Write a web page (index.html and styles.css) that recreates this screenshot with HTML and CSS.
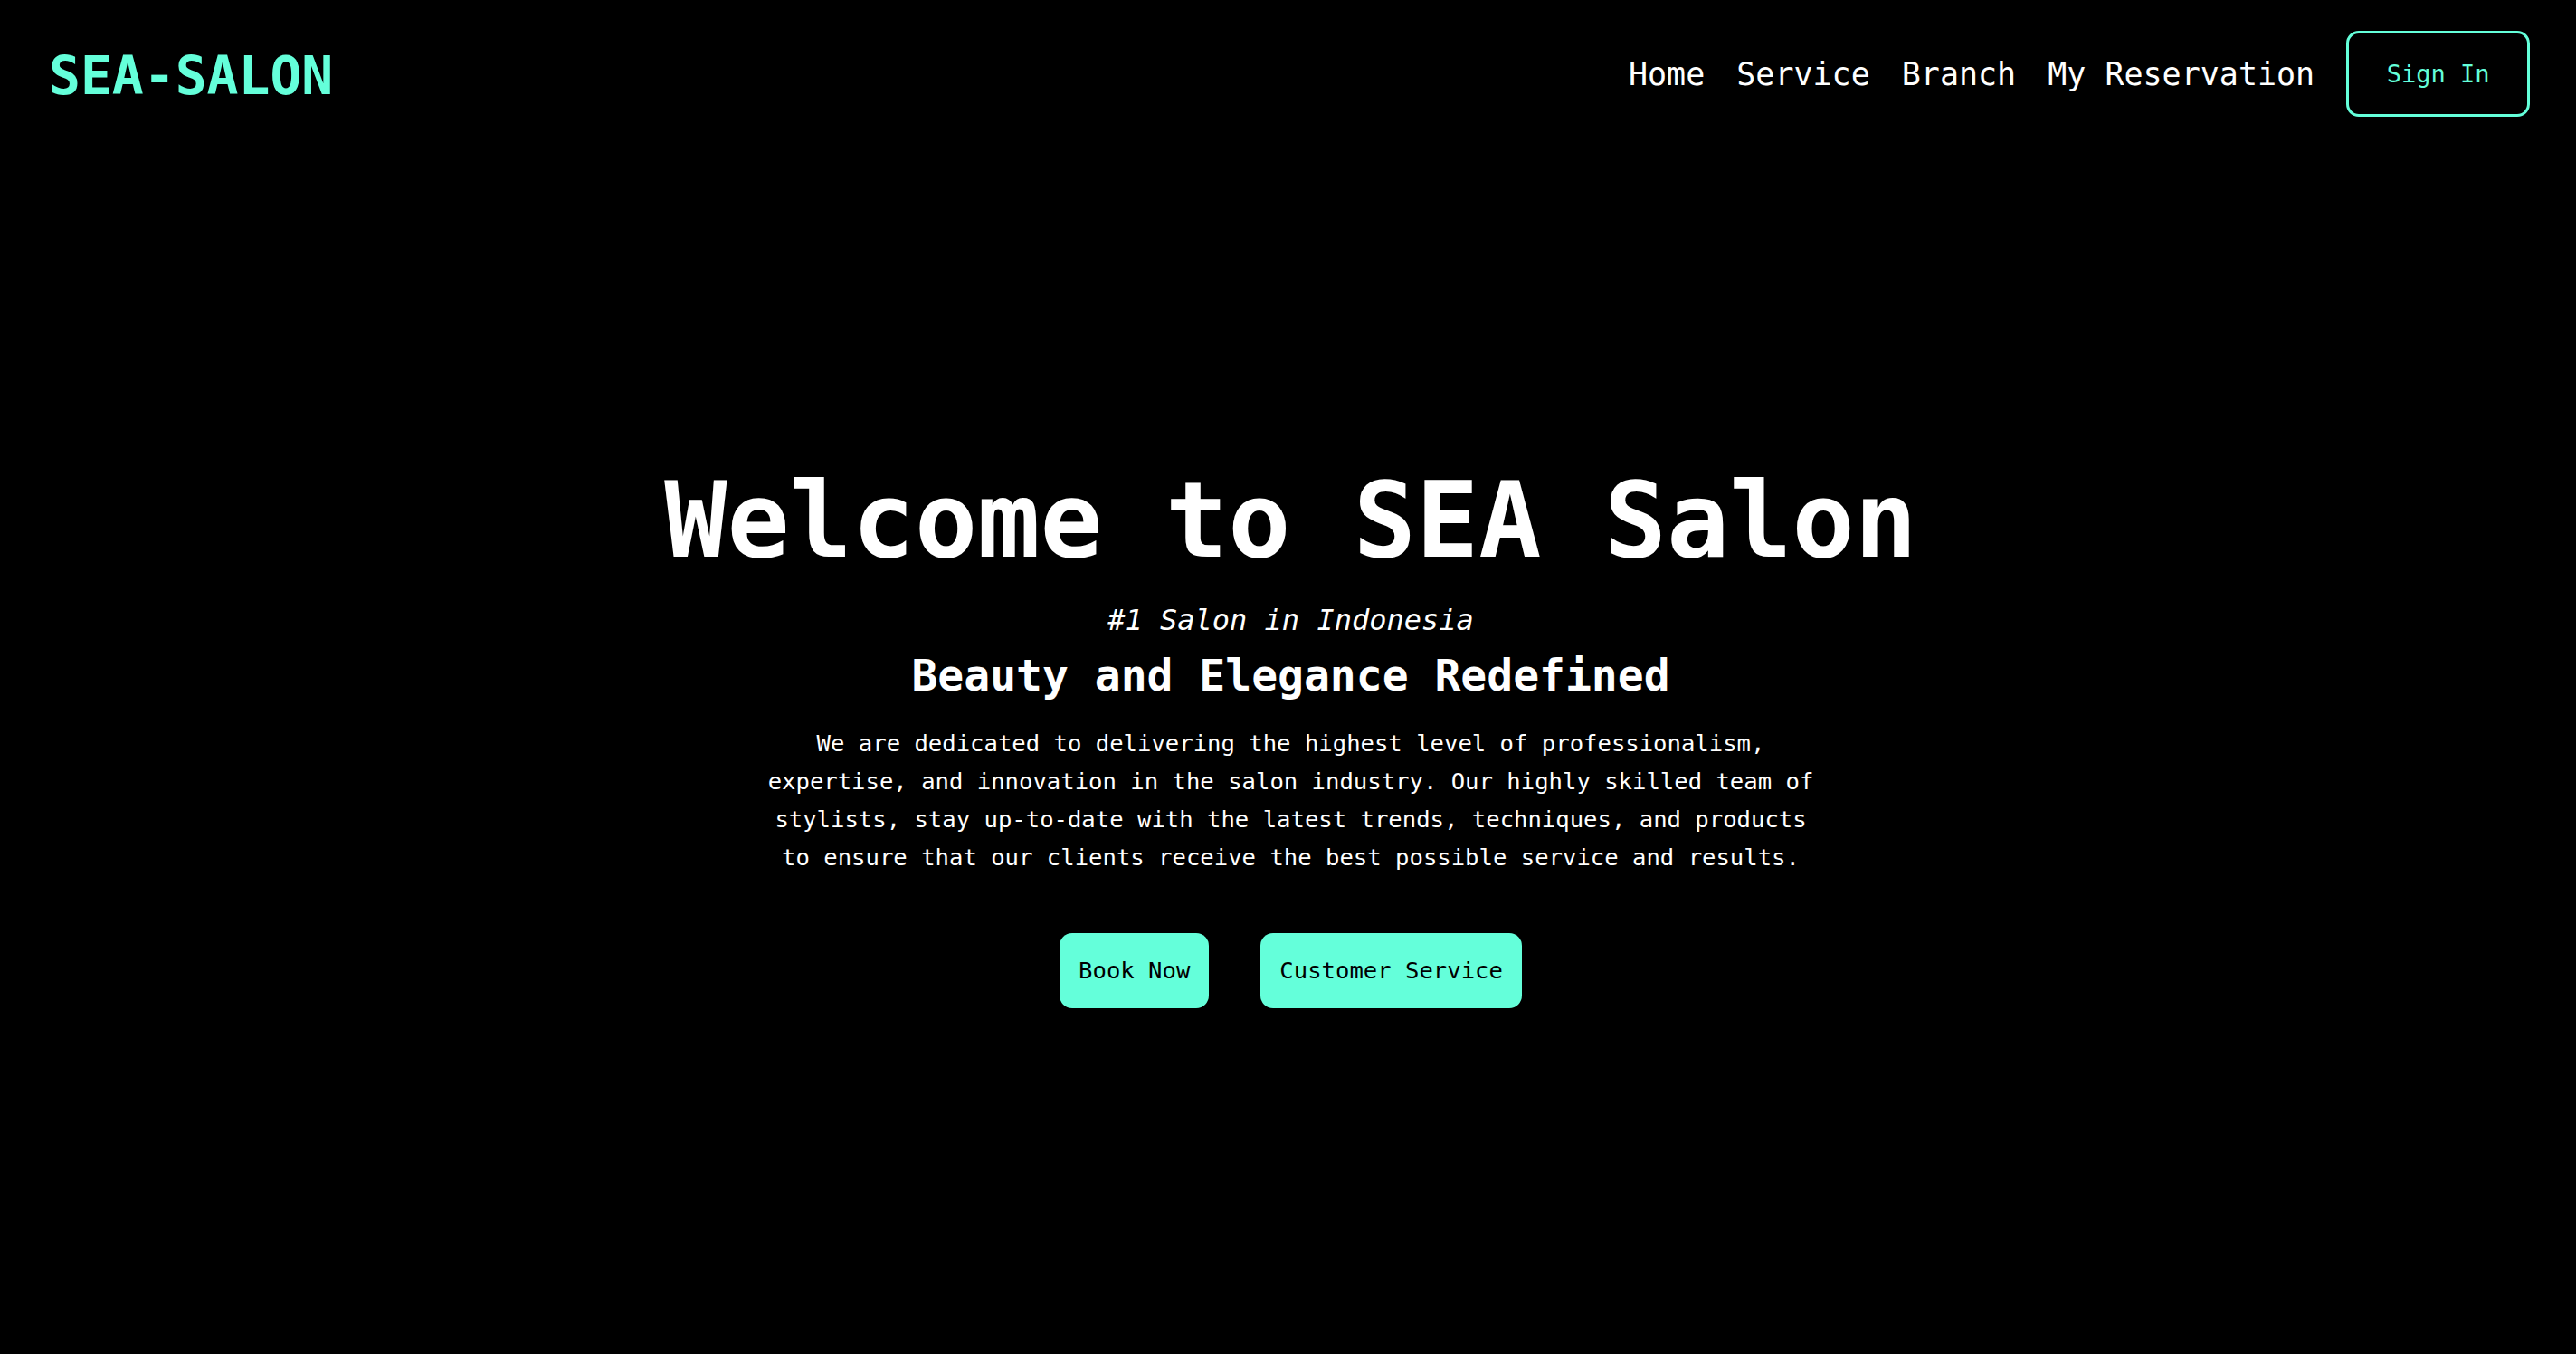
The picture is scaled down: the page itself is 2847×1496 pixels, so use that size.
FILE: index.html
```html
<!DOCTYPE html>
<html lang="en">
<head>
<meta charset="utf-8">
<title>SEA-SALON</title>
<link rel="stylesheet" href="styles.css">
</head>
<body>
  <header class="header">
    <a class="logo" href="#">SEA-SALON</a>
    <nav class="nav">
      <a class="nav-link" href="#">Home</a>
      <a class="nav-link" href="#">Service</a>
      <a class="nav-link" href="#">Branch</a>
      <a class="nav-link" href="#">My Reservation</a>
      <a class="sign-in" href="#">Sign In</a>
    </nav>
  </header>
  <main class="hero">
    <h1 class="hero-title">Welcome to SEA Salon</h1>
    <p class="hero-tag">#1 Salon in Indonesia</p>
    <h2 class="hero-sub">Beauty and Elegance Redefined</h2>
    <p class="hero-text">We are dedicated to delivering the highest level of professionalism, expertise, and innovation in the salon industry. Our highly skilled team of stylists, stay up-to-date with the latest trends, techniques, and products to ensure that our clients receive the best possible service and results.</p>
    <div class="hero-actions">
      <a class="btn" href="#">Book Now</a>
      <a class="btn" href="#">Customer Service</a>
    </div>
  </main>
</body>
</html>
```
FILE: styles.css
```css
* {
  box-sizing: border-box;
}

html, body {
  margin: 0;
  padding: 0;
  background: #000;
  color: #fff;
  font-family: "DejaVu Sans Mono", "Liberation Mono", monospace;
}

body {
  min-height: 1496px;
}

a {
  text-decoration: none;
  color: inherit;
}

.header {
  display: flex;
  align-items: center;
  justify-content: space-between;
  padding: 34px 51px 34px 54px;
}

.logo {
  color: #64ffda;
  font-size: 58px;
  font-weight: bold;
  line-height: 1.2;
  padding-top: 7px;
}

.nav {
  display: flex;
  align-items: center;
  gap: 35px;
}

.nav-link {
  font-size: 35px;
  line-height: 1.2;
  color: #fff;
}

.sign-in {
  display: block;
  color: #64ffda;
  font-size: 27px;
  line-height: 32px;
  padding: 28.5px 41.5px;
  border: 3px solid #64ffda;
  border-radius: 14px;
}

.hero {
  display: flex;
  flex-direction: column;
  align-items: center;
  text-align: center;
  padding-top: 343px;
  padding-left: 6px;
}

.hero-title {
  margin: 0;
  font-size: 115px;
  line-height: 1.2;
  font-weight: bold;
}

.hero-tag {
  margin: 22px 0 0;
  font-size: 32px;
  line-height: 1.2;
  font-style: italic;
}

.hero-sub {
  margin: 14px 0 0;
  font-size: 48px;
  line-height: 1.2;
  font-weight: bold;
}

.hero-text {
  margin: 24px 0 0;
  width: 1172px;
  font-size: 25.6px;
  line-height: 42px;
}

.hero-actions {
  display: flex;
  gap: 57px;
  margin-top: 63px;
}

.btn {
  display: block;
  background: #64ffda;
  color: #000;
  font-size: 25.6px;
  line-height: 30px;
  padding: 26.5px 21px;
  border-radius: 14px;
}
```
